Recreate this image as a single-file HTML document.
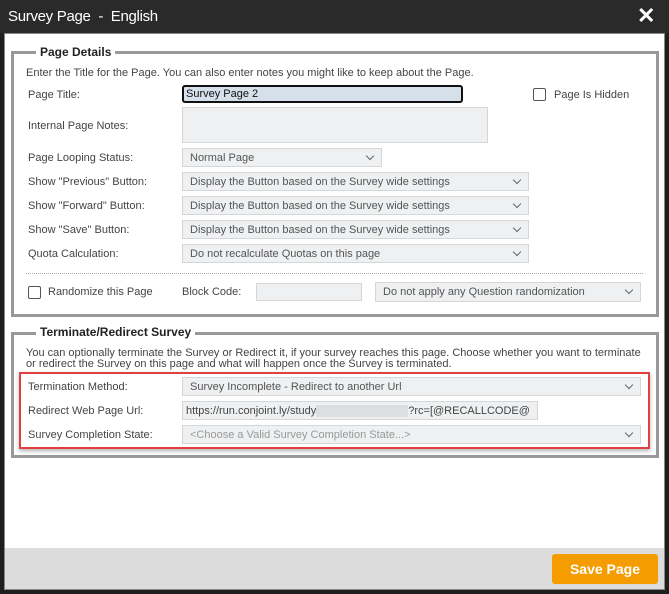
<!DOCTYPE html>
<html><head><style>
*{margin:0;padding:0;box-sizing:border-box}
body{width:669px;height:594px;background:#1e1e1e;font-family:"Liberation Sans",Arial,sans-serif;position:relative;overflow:hidden}
.a{position:absolute}
.t{position:absolute;font-size:11px;color:#444;white-space:nowrap}
.sel{position:absolute;background:#eef0f2;border:1px solid #d4d6d8;font-size:11px;color:#555;padding:3px 0 0 7px;white-space:nowrap}
.sel:after{content:"";position:absolute;right:8px;top:4px;width:5px;height:5px;border-right:1.5px solid #666;border-bottom:1.5px solid #666;transform:rotate(45deg)}
.cb{position:absolute;width:13px;height:13px;border:1px solid #555;border-radius:2px;background:#fff}
.fs{position:absolute;border:3px solid #999}
.lg{position:absolute;background:#fff;font-size:12px;font-weight:bold;color:#222;padding:0 4px}
</style></head><body>
<div class="a" style="left:0;top:0;width:669px;height:33px;background:#2a2a2a"></div>
<div class="a" style="left:8px;top:8px;color:#fff;font-size:15px;letter-spacing:-0.3px">Survey Page &nbsp;- &nbsp;English</div>
<div class="a" style="left:637px;top:3px;color:#fff;font-size:22px;font-weight:bold">✕</div>
<div class="a" style="left:4px;top:33px;width:661px;height:557px;border:1px solid #888;background:#fff"></div>
<div class="a" style="left:5px;top:548px;width:659px;height:41px;background:#dcdcdc"></div>
<div class="a" style="left:552px;top:554px;width:106px;height:30px;background:#f59c00;border-radius:3px;color:#fff;font-weight:bold;font-size:14px;text-align:center;line-height:30px">Save Page</div>

<div class="fs" style="left:11px;top:51px;width:648px;height:266px"></div>
<div class="lg" style="left:36px;top:45px">Page Details</div>
<div class="t" style="left:26px;top:67px">Enter the Title for the Page. You can also enter notes you might like to keep about the Page.</div>
<div class="t" style="left:28px;top:89px">Page Title:</div>
<div class="a" style="left:182px;top:85px;width:281px;height:18px;background:#d6e0ea;border:2px solid #111;border-radius:3px;font-size:11px;color:#111;padding:1px 0 0 2px">Survey Page 2</div>
<div class="cb" style="left:533px;top:88px"></div>
<div class="t" style="left:554px;top:89px">Page Is Hidden</div>
<div class="t" style="left:28px;top:120px">Internal Page Notes:</div>
<div class="a" style="left:182px;top:107px;width:306px;height:36px;background:#eef0f2;border:1px solid #d4d6d8"></div>
<div class="t" style="left:28px;top:152px">Page Looping Status:</div>
<div class="sel" style="left:182px;top:148px;width:200px;height:19px">Normal Page</div>
<div class="t" style="left:28px;top:176px">Show "Previous" Button:</div>
<div class="sel" style="left:182px;top:172px;width:347px;height:19px">Display the Button based on the Survey wide settings</div>
<div class="t" style="left:28px;top:200px">Show "Forward" Button:</div>
<div class="sel" style="left:182px;top:196px;width:347px;height:19px">Display the Button based on the Survey wide settings</div>
<div class="t" style="left:28px;top:224px">Show "Save" Button:</div>
<div class="sel" style="left:182px;top:220px;width:347px;height:19px">Display the Button based on the Survey wide settings</div>
<div class="t" style="left:28px;top:248px">Quota Calculation:</div>
<div class="sel" style="left:182px;top:244px;width:347px;height:19px">Do not recalculate Quotas on this page</div>
<div class="a" style="left:26px;top:273px;width:617px;border-top:1px dotted #aaa"></div>
<div class="cb" style="left:28px;top:286px"></div>
<div class="t" style="left:48px;top:286px">Randomize this Page</div>
<div class="t" style="left:182px;top:286px">Block Code:</div>
<div class="a" style="left:256px;top:283px;width:106px;height:18px;background:#eef0f2;border:1px solid #d4d6d8"></div>
<div class="sel" style="left:375px;top:282px;width:266px;height:20px">Do not apply any Question randomization</div>

<div class="fs" style="left:11px;top:332px;width:648px;height:126px"></div>
<div class="lg" style="left:36px;top:325px">Terminate/Redirect Survey</div>
<div class="t" style="left:26px;top:347px">You can optionally terminate the Survey or Redirect it, if your survey reaches this page. Choose whether you want to terminate</div>
<div class="t" style="left:26px;top:358px">or redirect the Survey on this page and what will happen once the Survey is terminated.</div>
<div class="a" style="left:19px;top:372px;width:631px;height:77px;border:2px solid #e04040;box-shadow:0 2px 4px rgba(0,0,0,.3)"></div>
<div class="t" style="left:28px;top:381px">Termination Method:</div>
<div class="sel" style="left:182px;top:377px;width:459px;height:19px">Survey Incomplete - Redirect to another Url</div>
<div class="t" style="left:28px;top:405px">Redirect Web Page Url:</div>
<div class="a" style="left:182px;top:401px;width:356px;height:19px;background:#eef0f2;border:1px solid #d4d6d8;font-size:11px;color:#444;padding:3px 0 0 3px;white-space:nowrap;overflow:hidden">https://run.conjoint.ly/study<span style="display:inline-block;width:92px;height:12px;background:#dcdfe2;vertical-align:middle"></span>?rc=[@RECALLCODE@</div>
<div class="t" style="left:28px;top:429px">Survey Completion State:</div>
<div class="sel" style="left:182px;top:425px;width:459px;height:19px;color:#999">&lt;Choose a Valid Survey Completion State...&gt;</div>
</body></html>
